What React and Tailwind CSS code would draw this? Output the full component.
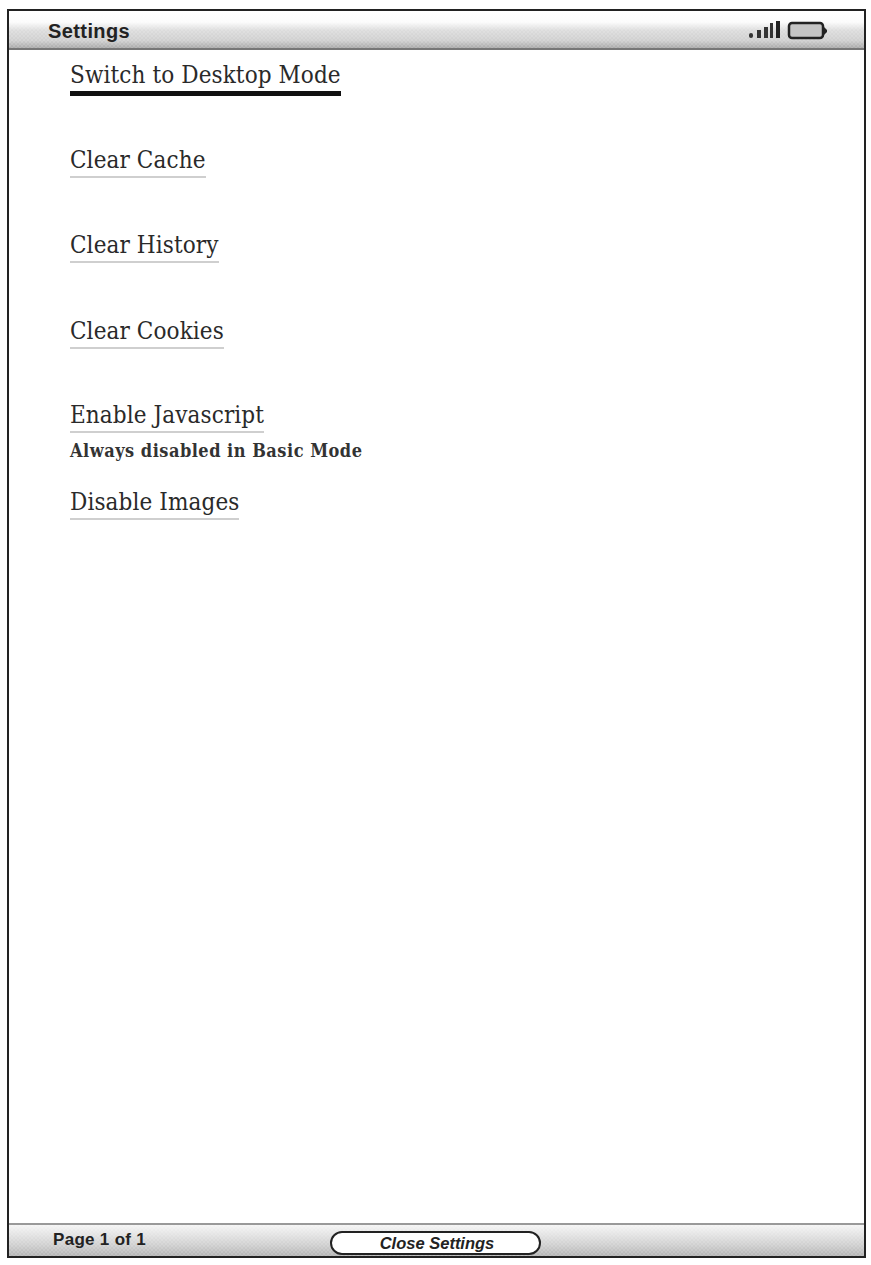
import React from "react";

const serif = "font-['DejaVu_Serif_Condensed','DejaVu_Serif',serif]";
const sans = "font-['Liberation_Sans',Arial,sans-serif]";

function SettingLink({ label, note, active, className }) {
  return (
    <div className={className}>
      <div
        className={`w-fit text-[24px] leading-[29px] tracking-[0.1px] text-[#2a2a2a] ${serif} ${
          active ? "border-b-[5px] border-[#111] pb-[1px]" : "border-b-2 border-[#cfcfcf] pb-[1px]"
        }`}
      >
        {label}
      </div>
      {note && (
        <div className={`mt-[7px] text-[18px] leading-[22px] tracking-[0.5px] font-bold text-[#333] ${serif}`}>{note}</div>
      )}
    </div>
  );
}

function StatusIcons() {
  return (
    <svg width="78" height="20" viewBox="0 0 78 20" className="mr-[37px] mt-[1px]">
      {/* signal bars */}
      <rect x="0" y="13" width="4" height="5" rx="2" fill="#333" />
      <rect x="8" y="10" width="4" height="8" fill="#333" />
      <rect x="15" y="7" width="4" height="11" fill="#333" />
      <rect x="21" y="3" width="3" height="15" fill="#333" />
      <rect x="27" y="1" width="4" height="17" fill="#222" />
      {/* battery */}
      <rect x="40" y="3" width="34" height="15" rx="3" fill="#c4c4c4" stroke="#222" strokeWidth="2.5" />
      <path d="M75 7 L78 10 L78 12 L75 15 Z" fill="#222" />
    </svg>
  );
}

export default function App() {
  return (
    <div className="h-[1265px] w-[871px] bg-white pb-[7px] pl-[7px] pr-[5px] pt-[9px]">
      <div className="flex h-full flex-col border-2 border-[#222] bg-white">
        {/* header */}
        <div className="flex h-[39px] shrink-0 items-center justify-between border-b-2 border-[#777] bg-[image:repeating-conic-gradient(#ffffff22_0_25%,#0000_0_50%),linear-gradient(to_bottom,#ffffff_0%,#fbfbfb_30%,#dcdcdc_52%,#cfcfcf_80%,#a9a9a9_100%)] bg-[size:4px_4px,100%_100%]">
          <span className={`ml-[39px] mt-[3px] text-[20px] tracking-[0.4px] font-bold text-[#222] ${sans}`}>Settings</span>
          <StatusIcons />
        </div>

        {/* settings list */}
        <div className="flex-1 pl-[61px] pt-[11px]">
          <SettingLink label="Switch to Desktop Mode" active />
          <SettingLink label="Clear Cache" className="mt-[50px]" />
          <SettingLink label="Clear History" className="mt-[53px]" />
          <SettingLink label="Clear Cookies" className="mt-[54px]" />
          <SettingLink label="Enable Javascript" note="Always disabled in Basic Mode" className="mt-[52px]" />
          <SettingLink label="Disable Images" className="mt-[26px]" />
        </div>

        {/* footer */}
        <div className="flex h-[33px] shrink-0 items-center border-t-2 border-[#999] bg-[image:repeating-conic-gradient(#ffffff22_0_25%,#0000_0_50%),linear-gradient(to_bottom,#f4f4f4_0%,#e4e4e4_30%,#cfcfcf_65%,#b4b4b4_100%)] bg-[size:4px_4px,100%_100%]">
          <span className={`ml-[44px] mt-[-1px] w-[277px] text-[17px] tracking-[0.3px] font-bold text-[#222] ${sans}`}>Page 1 of 1</span>
          <div
            className={`mt-[5px] flex h-[24px] w-[211px] items-center justify-center rounded-[12px] border-2 border-[#222] bg-white pl-[3px] text-[16.5px] font-bold italic text-[#222] ${sans}`}
          >
            Close Settings
          </div>
        </div>
      </div>
    </div>
  );
}
